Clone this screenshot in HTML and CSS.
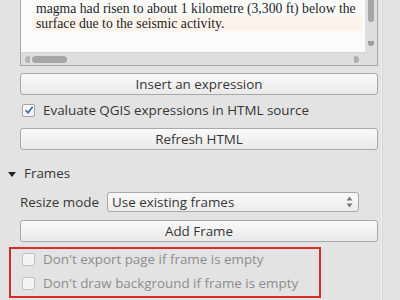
FILE: index.html
```html
<!DOCTYPE html>
<html lang="en">
<head>
    <meta charset="UTF-8">
    <title>HTML item properties</title>
    <link rel="stylesheet" href="styles.css">
</head>
<body>
    <div class="dock">
        <div class="editor">
            <div class="page">
                <p class="line">magma had risen to about 1 kilometre (3,300 ft) below the</p>
                <p class="line current">surface due to the seismic activity.</p>
                <p class="line gap">&nbsp;</p>
                <p class="line">&lt;https://en.wikipedia.org/wiki/Mount_Merapi&gt;</p>
            </div>
            <div class="vscroll">
                <span class="vthumb"></span>
                <span class="arrow-down"></span>
            </div>
            <div class="hscroll">
                <span class="arrow-left"></span>
                <span class="hthumb"></span>
                <span class="arrow-right"></span>
            </div>
            <div class="corner"></div>
        </div>

        <button class="btn first">Insert an expression</button>

        <label class="check">
            <span class="box checked">
                <svg width="10" height="10" viewBox="0 0 10 10"><path d="M1.5 5.2 L4 7.8 L8.7 1.8" fill="none" stroke="#3465a4" stroke-width="1.6"/></svg>
            </span>
            Evaluate QGIS expressions in HTML source
        </label>

        <button class="btn">Refresh HTML</button>

        <div class="group-title">
            <span class="triangle"></span>
            Frames
        </div>

        <div class="field">
            <span class="field-label">Resize mode</span>
            <div class="select">
                <span>Use existing frames</span>
                <span class="spin">
                    <svg width="7" height="12" viewBox="0 0 7 12"><path d="M3.5 0.5 L6.5 4.5 L0.5 4.5 Z M0.5 7.5 L6.5 7.5 L3.5 11.5 Z" fill="#7a7a7a"/></svg>
                </span>
            </div>
        </div>

        <button class="btn">Add Frame</button>

        <div class="highlight">
            <label class="check disabled">
                <span class="box"></span>
                Don't export page if frame is empty
            </label>
            <label class="check disabled">
                <span class="box"></span>
                Don't draw background if frame is empty
            </label>
        </div>
    </div>
</body>
</html>
```

FILE: styles.css
```css
body {
    margin: 0;
    width: 400px;
    height: 300px;
    overflow: hidden;
    background-color: #e3e3e3;
    font-family: 'Open Sans', 'Noto Sans', sans-serif;
    font-size: 13.4px;
    color: #363636;
}

.dock {
    width: 381px;
    height: 300px;
    border-right: 1px solid #f0f0f0;
    box-shadow: 1px 0 0 #d6d6d6;
    display: flex;
    flex-direction: column;
}

/* html source editor, scrolled */
.editor {
    margin-left: 20px;
    width: 356px;
    border: 1px solid #a8a8a8;
    border-top: none;
    display: grid;
    grid-template-columns: 1fr 12px;
    grid-template-rows: 52px 13px;
    background-color: #dcdcdc;
}

.page {
    background-color: #fbfbfb;
    overflow: hidden;
    padding: 1px 0 0 11px;
}

.line {
    margin: 0;
    padding-left: 4px;
    height: 15px;
    line-height: 15px;
    font-family: 'Liberation Serif', serif;
    font-size: 13.7px;
    color: #1e1e1e;
    white-space: nowrap;
}

.line.current {
    background-color: #fdf3eb;
    margin-right: 2px;
}

.line.gap {
    height: 19px;
}

.vscroll {
    position: relative;
    background-color: #dedede;
}

.vthumb {
    position: absolute;
    left: 3px;
    top: 0;
    width: 6px;
    height: 22px;
    border-radius: 0 0 3px 3px;
    background-color: #a6a6a6;
}

.arrow-down {
    position: absolute;
    left: 3px;
    top: 41px;
    width: 6px;
    height: 5px;
    border-radius: 0 0 3px 3px;
    background-color: #9c9c9c;
}

.hscroll {
    position: relative;
    background-color: #dedede;
    border-top: 1px solid #d2d2d2;
}

.hthumb {
    position: absolute;
    left: 11px;
    top: 3px;
    width: 35px;
    height: 7px;
    border-radius: 4px;
    background-color: #a6a6a6;
}

.arrow-left {
    position: absolute;
    left: 4px;
    top: 3px;
    width: 5px;
    height: 7px;
    border-radius: 4px 0 0 4px;
    background-color: #b4b4b4;
}

.arrow-right {
    position: absolute;
    right: 6px;
    top: 3px;
    width: 5px;
    height: 7px;
    border-radius: 0 4px 4px 0;
    background-color: #b0b0b0;
}

.corner {
    background-color: #dedede;
}

.btn {
    margin: 0 0 0 20px;
    width: 358px;
    height: 22px;
    padding: 0;
    border: 1px solid #a9a9a9;
    border-radius: 3px;
    background: linear-gradient(#fafafa, #e9e9e9);
    font-family: inherit;
    font-size: 13.4px;
    color: #363636;
    text-align: center;
}

.btn.first {
    margin-top: 7px;
}

.check {
    display: flex;
    align-items: center;
    gap: 8px;
    height: 20px;
    margin: 5px 0 8px 22px;
}

.box {
    display: flex;
    align-items: center;
    justify-content: center;
    width: 11px;
    height: 11px;
    border: 1px solid #a3a3a3;
    border-radius: 2px;
    background: linear-gradient(#ffffff, #f0f0f0);
}

.group-title {
    display: flex;
    align-items: center;
    gap: 8px;
    height: 18px;
    margin: 14px 0 0 8px;
}

.triangle {
    width: 0;
    height: 0;
    border-left: 4.5px solid transparent;
    border-right: 4.5px solid transparent;
    border-top: 5px solid #222222;
    margin-top: 3px;
}

.field {
    display: flex;
    align-items: center;
    gap: 8px;
    margin: 10px 0 8px 20px;
}

.field-label {
    width: 79px;
}

.select {
    flex: 1;
    height: 18px;
    margin-right: 22px;
    display: flex;
    align-items: center;
    justify-content: space-between;
    padding: 0 5px 0 4px;
    border: 1px solid #a9a9a9;
    border-radius: 3px;
    background: linear-gradient(#fafafa, #ececec);
}

.spin {
    display: flex;
}

.highlight {
    margin: 5px 0 0 9px;
    width: 308px;
    height: 47px;
    border: 2px solid #d52b2b;
    display: flex;
    flex-direction: column;
    gap: 4px;
}

.highlight .check {
    margin: 0 0 0 11px;
}

.check.disabled {
    color: #8d8d8d;
}

.check.disabled .box {
    border-color: #c0c0c0;
    background: #f4f4f4;
}
```
